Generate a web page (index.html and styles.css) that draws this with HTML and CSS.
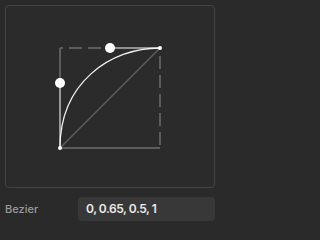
FILE: index.html
```html
<!DOCTYPE html>
<html>
<head>
<meta charset="utf-8">
<link rel="stylesheet" href="styles.css">
</head>
<body>
<div class="wrap">
  <div class="panel">
    <svg class="graph" width="208" height="181" viewBox="6 6 208 181">
      <line x1="60" y1="48" x2="60" y2="83" class="grid"/>
      <line x1="60" y1="148" x2="160" y2="148" class="grid"/>
      <line x1="60" y1="148" x2="160" y2="48" class="diag"/>
      <line x1="60" y1="48" x2="110" y2="48" class="dash top"/>
      <line x1="160" y1="148" x2="160" y2="48" class="dash right"/>
      <line x1="60" y1="148" x2="60" y2="83" class="handle"/>
      <line x1="110" y1="48" x2="160" y2="48" class="handle"/>
      <path d="M60 148 C60 83 110 48 160 48" class="curve"/>
      <circle cx="60" cy="148" r="2" class="dot"/>
      <circle cx="160" cy="48" r="2" class="dot"/>
      <circle cx="60" cy="83" r="5" class="dot"/>
      <circle cx="110" cy="48" r="5" class="dot"/>
    </svg>
  </div>
  <div class="row">
    <span class="label">Bezier</span>
    <div class="input">0, 0.65, 0.5, 1</div>
  </div>
</div>
</body>
</html>
```
FILE: styles.css
```css
html, body {
  margin: 0;
  padding: 0;
  background: #2a2a2a;
  font-family: Inter, "Noto Sans", sans-serif;
}
.wrap {
  padding: 5px 5px 0 5px;
  width: 210px;
}
.panel {
  box-sizing: border-box;
  width: 210px;
  height: 183px;
  border: 1px solid #444444;
  border-radius: 4px;
  background: #2b2b2b;
}
.graph {
  display: block;
}
.grid {
  stroke: #5c5c5c;
  stroke-width: 2;
}
.diag {
  stroke: #5e5e5e;
  stroke-width: 1.5;
}
.dash {
  stroke: #5c5c5c;
  stroke-width: 2;
  stroke-dasharray: 13 6;
}
.top {
  stroke-dashoffset: 10;
}
.right {
  stroke-dashoffset: 16;
}
.handle {
  stroke: #b4b4b4;
  stroke-width: 1.6;
}
.curve {
  fill: none;
  stroke: #f2f2f2;
  stroke-width: 1.3;
}
.dot {
  fill: #ffffff;
}
.row {
  display: flex;
  align-items: center;
  justify-content: space-between;
  margin-top: 9px;
}
.label {
  font-size: 11px;
  color: #9a9a9a;
  font-weight: 500;
}
.input {
  box-sizing: border-box;
  width: 137px;
  height: 24px;
  border-radius: 4px;
  background: #383838;
  color: #ececec;
  font-size: 12px;
  font-weight: 600;
  letter-spacing: -0.45px;
  line-height: 24px;
  padding-left: 8px;
}
```
